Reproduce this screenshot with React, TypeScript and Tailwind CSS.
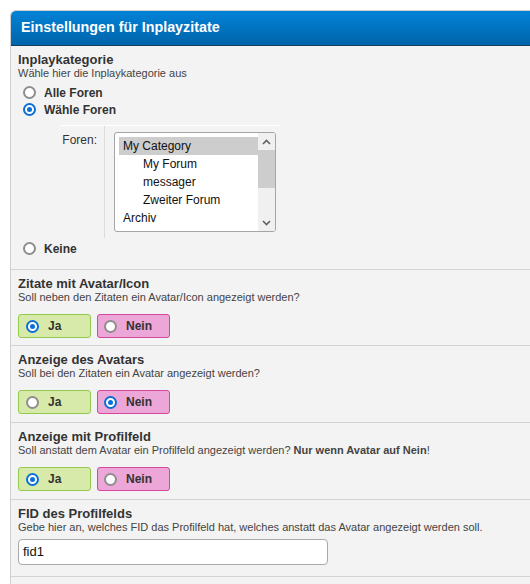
import React from "react";

const font = { fontFamily: '"Liberation Sans", Arial, sans-serif' };

function Radio({ checked }: { checked: boolean }) {
  return checked ? (
    <span className="w-[13px] h-[13px] rounded-full border-2 border-[#0b6fd6] bg-white flex items-center justify-center shrink-0">
      <span className="w-[5px] h-[5px] rounded-full bg-[#0b6fd6]" />
    </span>
  ) : (
    <span className="w-[13px] h-[13px] rounded-full border-2 border-[#8e8e8e] bg-white shrink-0" />
  );
}

function YesNo({ yes }: { yes: boolean }) {
  return (
    <div className="flex gap-[6px] mt-[10px]">
      <div className="w-[73px] h-[24px] rounded-[3px] border border-[#93c94e] bg-[#d8eaa9] flex items-center pl-[7px] gap-[9px]">
        <Radio checked={yes} />
        <span className="text-[12px] font-bold text-[#333]">Ja</span>
      </div>
      <div className="w-[73px] h-[24px] rounded-[3px] border border-[#d3479c] bg-[#eca6d7] flex items-center pl-[6px] gap-[9px]">
        <Radio checked={!yes} />
        <span className="text-[12px] font-bold text-[#333]">Nein</span>
      </div>
    </div>
  );
}

function Head({ title, desc }: { title: string; desc: React.ReactNode }) {
  return (
    <>
      <div className="text-[13px] leading-[14px] font-bold text-[#333]">{title}</div>
      <div className="text-[11px] leading-[13px] text-[#444]">{desc}</div>
    </>
  );
}

export default function App() {
  return (
    <div className="min-h-screen bg-white pt-[10px] pl-[10px]" style={font}>
      <div className="border-l border-t border-[#cfcfcf] rounded-tl-[6px] overflow-hidden bg-[#f3f3f3]">
        <div className="h-[35px] bg-gradient-to-b from-[#0283d8] to-[#0064aa] border-b border-[#123f60] flex items-center pl-[10px] text-white font-bold text-[14.3px]">
          Einstellungen für Inplayzitate
        </div>

        {/* Section 1 */}
        <div className="px-[7px] pt-[7px] pb-[12px] border-b border-[#d3d3d3]">
          <Head title="Inplaykategorie" desc="Wähle hier die Inplaykategorie aus" />
          <div className="mt-[4px]">
            <label className="flex items-center h-[17px] pl-[5px] gap-[8px]">
              <Radio checked={false} />
              <span className="text-[12px] font-bold text-[#333]">Alle Foren</span>
            </label>
            <label className="flex items-center h-[17px] pl-[5px] gap-[8px]">
              <Radio checked={true} />
              <span className="text-[12px] font-bold text-[#333]">Wähle Foren</span>
            </label>
          </div>
          <div className="ml-[42px] mt-[7px] w-[220px] border-t border-white flex">
            <div className="w-[45px] border-r border-[#dcdcdc] pr-[7px] pt-[7px] text-right text-[12px] leading-[14px] text-[#333]">
              Foren:
            </div>
            <div className="pl-[9px] pt-[6px] pb-[6px]">
              <div className="w-[162px] h-[100px] border border-[#a5a5a5] rounded-[3px] bg-white flex overflow-hidden">
                <div className="flex-1 pt-[4px] pl-[4px] text-[12px] text-[#111]">
                  <div className="h-[18px] leading-[18px] bg-[#cdcdcd] pl-[4px]">My Category</div>
                  <div className="h-[18px] leading-[18px] pl-[24px]">My Forum</div>
                  <div className="h-[18px] leading-[18px] pl-[24px]">messager</div>
                  <div className="h-[18px] leading-[18px] pl-[24px]">Zweiter Forum</div>
                  <div className="h-[18px] leading-[18px] pl-[4px]">Archiv</div>
                </div>
                <div className="w-[17px] bg-[#f0f0f0] flex flex-col">
                  <div className="h-[17px] flex items-center justify-center">
                    <svg width="9" height="6" viewBox="0 0 9 6"><path d="M1 5 L4.5 1.5 L8 5" fill="none" stroke="#606060" strokeWidth="1.6" /></svg>
                  </div>
                  <div className="h-[38px] bg-[#cdcdcd]" />
                  <div className="flex-1" />
                  <div className="h-[17px] flex items-center justify-center">
                    <svg width="9" height="6" viewBox="0 0 9 6"><path d="M1 1 L4.5 4.5 L8 1" fill="none" stroke="#606060" strokeWidth="1.6" /></svg>
                  </div>
                </div>
              </div>
            </div>
          </div>
          <label className="flex items-center h-[17px] pl-[5px] gap-[8px] mt-[2px]">
            <Radio checked={false} />
            <span className="text-[12px] font-bold text-[#333]">Keine</span>
          </label>
        </div>

        {/* Section 2 */}
        <div className="px-[7px] pt-[7px] pb-[7px] border-b border-[#d3d3d3]">
          <Head title="Zitate mit Avatar/Icon" desc="Soll neben den Zitaten ein Avatar/Icon angezeigt werden?" />
          <YesNo yes={true} />
        </div>

        {/* Section 3 */}
        <div className="px-[7px] pt-[7px] pb-[8px] border-b border-[#d3d3d3]">
          <Head title="Anzeige des Avatars" desc="Soll bei den Zitaten ein Avatar angezeigt werden?" />
          <YesNo yes={false} />
        </div>

        {/* Section 4 */}
        <div className="px-[7px] pt-[7px] pb-[8px] border-b border-[#d3d3d3]">
          <Head
            title="Anzeige mit Profilfeld"
            desc={
              <>
                Soll anstatt dem Avatar ein Profilfeld angezeigt werden? <b>Nur wenn Avatar auf Nein</b>!
              </>
            }
          />
          <YesNo yes={true} />
        </div>

        {/* Section 5 */}
        <div className="px-[7px] pt-[7px] pb-[11px] border-b border-[#d3d3d3]">
          <Head
            title="FID des Profilfelds"
            desc="Gebe hier an, welches FID das Profilfeld hat, welches anstatt das Avatar angezeigt werden soll."
          />
          <div className="mt-[5px] w-[310px] h-[26px] border border-[#a9a9a9] rounded-[4px] bg-white flex items-center px-[4px] text-[13px] text-[#111]">
            fid1
          </div>
        </div>
        <div className="h-[20px]" />
      </div>
    </div>
  );
}
